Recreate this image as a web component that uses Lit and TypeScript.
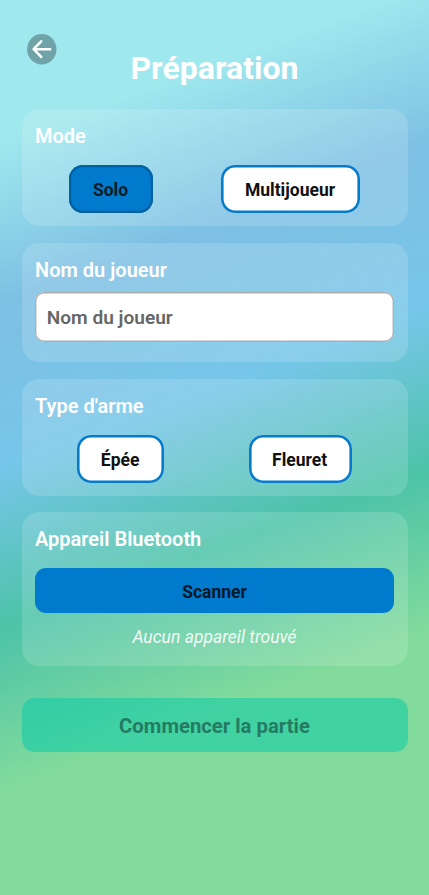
import { LitElement, html, css } from "lit";
import { customElement, state } from "lit/decorators.js";
import { classMap } from "lit/directives/class-map.js";

@customElement("setup-card")
class SetupCard extends LitElement {
  static properties = { heading: { type: String } };
  declare heading: string;

  static styles = css`
    :host {
      display: flex;
      flex-direction: column;
      box-sizing: border-box;
      padding: 15px 13.5px 0;
      border-radius: 17px;
      background: rgba(255, 255, 255, 0.15);
    }
    .heading {
      margin: 0;
      color: #fff;
      font-size: 20px;
      line-height: 24px;
      font-weight: 600;
      white-space: nowrap;
    }
  `;

  render() {
    return html`<h2 class="heading">${this.heading}</h2><slot></slot>`;
  }
}

@customElement("app-root")
class AppRoot extends LitElement {
  @state() private mode = "Solo";
  @state() private weapon = "";

  static styles = css`
    :host {
      display: flex;
      flex-direction: column;
      box-sizing: border-box;
      height: 895px;
      padding: 33.5px 21.5px 0;
      font-family: Roboto, "Liberation Sans", sans-serif;
      background: linear-gradient(
        159.5deg,
        #9fe8ee 134px,
        #7ec0e3 284px,
        #76c6e9 437px,
        #4dc3a8 589px,
        #82db9c 743px
      );
    }
    button,
    input {
      box-sizing: border-box;
      margin: 0;
      font-family: inherit;
    }
    .back {
      flex: none;
      display: block;
      width: 30px;
      height: 31px;
      margin-left: 5px;
      padding: 0;
      border: 0;
      background: none;
    }
    .back svg {
      display: block;
    }
    .title {
      margin: -16.5px 0 0;
      text-align: center;
      color: #fff;
      font-size: 32px;
      line-height: 40px;
      font-weight: 700;
    }
    .mode { height: 117px; margin-top: 21px; }
    .player { height: 119px; margin-top: 17px; }
    .weapon { height: 117px; margin-top: 17px; }
    .bluetooth { height: 153.5px; margin-top: 16px; }
    .options {
      display: flex;
      justify-content: space-around;
      margin-top: 17px;
    }
    .option {
      height: 48px;
      padding: 2px 24.5px 0 23.5px;
      border: 0;
      box-shadow: inset 0 0 0 2.6px #067bcb;
      border-radius: 14px;
      background: #fff;
      color: #111;
      font-size: 17.5px;
      font-weight: 700;
    }
    .option.selected {
      box-shadow: inset 0 0 0 2.2px #0560a2;
      background: #007acc;
      color: #0a1a26;
    }
    .name {
      height: 50px;
      margin-top: 9.5px;
      padding: 1px 11.8px 0;
      border: 0;
      box-shadow: inset 0 0 0 1.4px #aaafb2;
      border-radius: 9px;
      background: #fff;
      font-size: 19.1px;
      font-weight: 600;
      outline: none;
    }
    .name::placeholder {
      color: #666;
      opacity: 1;
    }
    .scan {
      height: 45px;
      margin-top: 17px;
      padding: 3px 0 0;
      border: 0;
      border-radius: 11px;
      background: #007acc;
      color: #07192a;
      font-size: 17.5px;
      font-weight: 700;
    }
    .empty {
      margin: 12.6px 0 0;
      text-align: center;
      color: rgba(255, 255, 255, 0.92);
      font-size: 17.5px;
      line-height: 22px;
      font-style: italic;
    }
    .start {
      flex: none;
      height: 53.5px;
      margin-top: 32.5px;
      padding: 2px 0 0;
      border: 0;
      border-radius: 13px;
      background: rgba(0, 201, 167, 0.5);
      color: #237c62;
      font-size: 20.3px;
      font-weight: 700;
    }
  `;

  private option(label: string, current: string, pick: () => void) {
    return html`<button
      class=${classMap({ option: true, selected: label === current })}
      @click=${pick}
    >${label}</button>`;
  }

  render() {
    return html`
      <button class="back" aria-label="Retour">
        <svg width="30" height="31" viewBox="0 0 30 31" fill="none">
          <ellipse cx="14.8" cy="15.3" rx="14.7" ry="15.3" fill="#70a3a8" />
          <path
            d="M23.2 15.2H6.8M14.2 7.4L6.6 15.2L14.2 22.8"
            stroke="#fff"
            stroke-width="2.5"
            stroke-linecap="round"
            stroke-linejoin="round"
          />
        </svg>
      </button>
      <h1 class="title">Préparation</h1>
      <setup-card class="mode" heading="Mode">
        <div class="options">
          ${["Solo", "Multijoueur"].map((m) => this.option(m, this.mode, () => (this.mode = m)))}
        </div>
      </setup-card>
      <setup-card class="player" heading="Nom du joueur">
        <input class="name" placeholder="Nom du joueur" />
      </setup-card>
      <setup-card class="weapon" heading="Type d'arme">
        <div class="options">
          ${["Épée", "Fleuret"].map((w) => this.option(w, this.weapon, () => (this.weapon = w)))}
        </div>
      </setup-card>
      <setup-card class="bluetooth" heading="Appareil Bluetooth">
        <button class="scan">Scanner</button>
        <p class="empty">Aucun appareil trouvé</p>
      </setup-card>
      <button class="start">Commencer la partie</button>
    `;
  }
}
